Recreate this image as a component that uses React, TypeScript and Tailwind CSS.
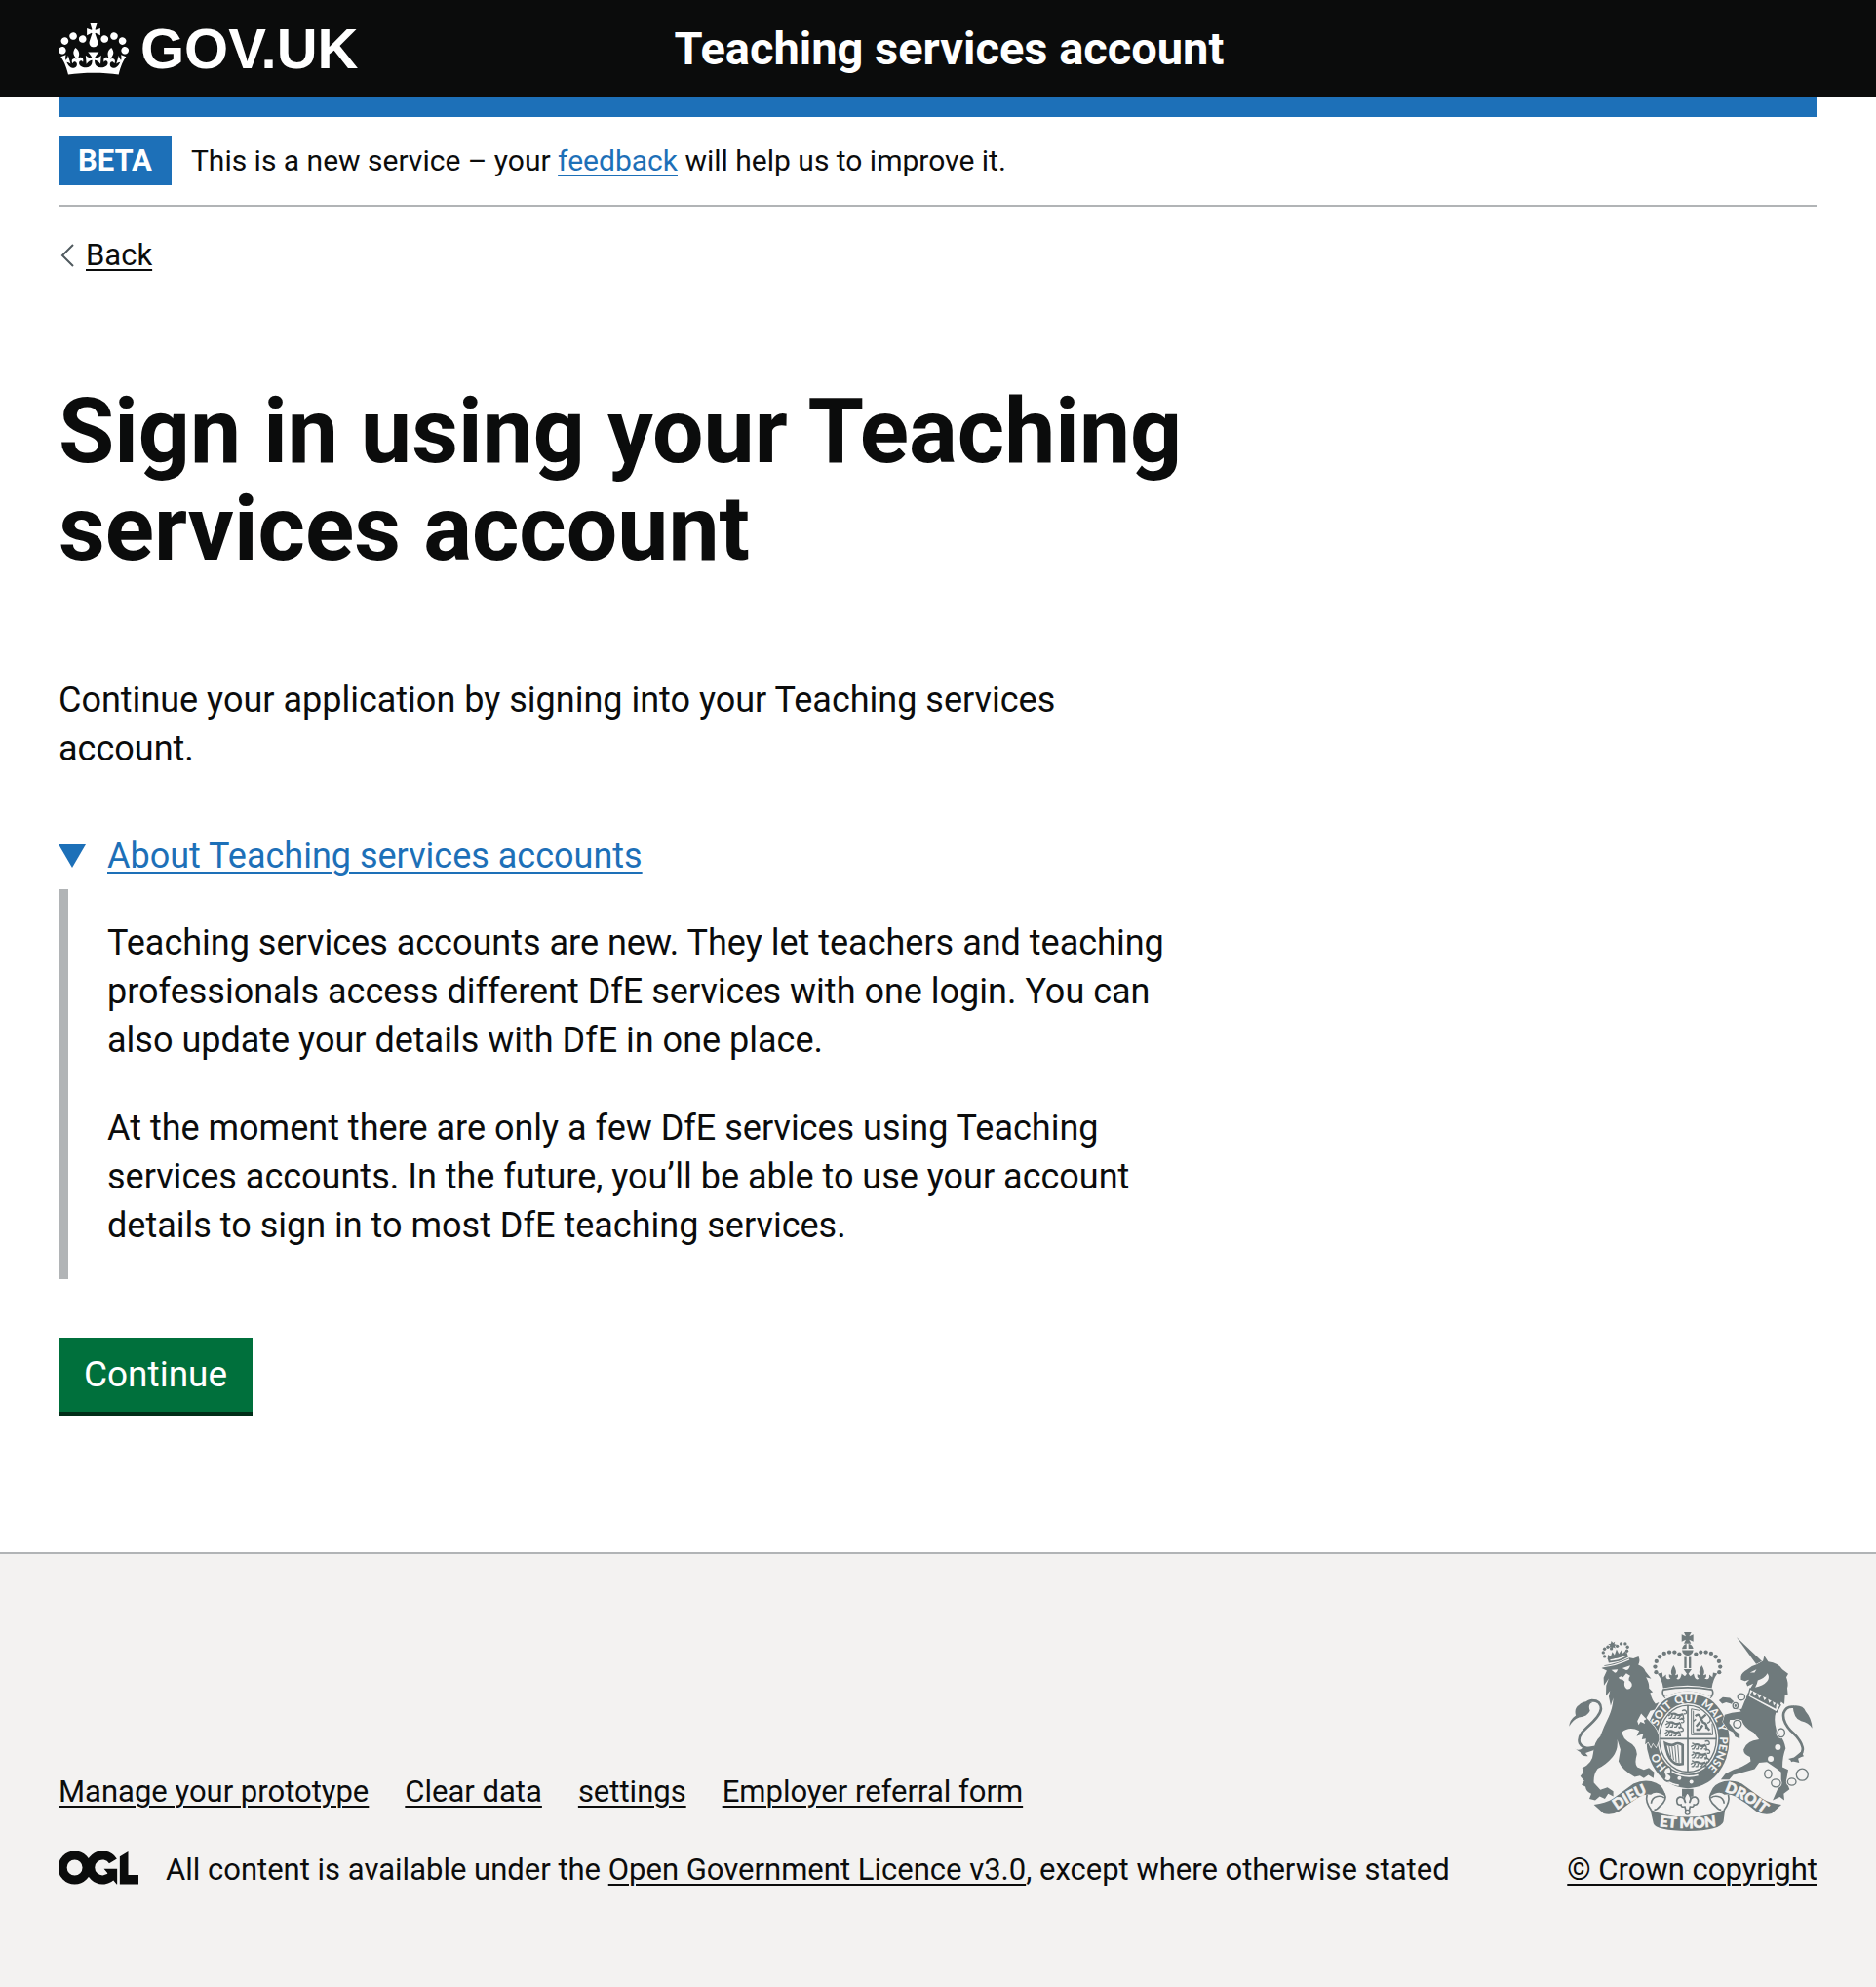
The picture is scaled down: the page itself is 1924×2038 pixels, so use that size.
import type { ReactNode } from "react";

const INK = "#6f7a7c";
const PAPER = "#f3f2f1";

function CrownIcon() {
  return (
    <svg viewBox="0 0 132 97" className="h-[53px] w-[72px] fill-current" aria-hidden="true">
      <path
        fillRule="evenodd"
        d="M25 30.2c3.5 1.5 7.7-.2 9.1-3.7 1.5-3.6-.2-7.8-3.9-9.2-3.6-1.4-7.6.3-9.1 3.9-1.4 3.5.3 7.5 3.9 9zM9 39.5c3.6 1.5 7.8-.2 9.2-3.7 1.5-3.6-.2-7.8-3.9-9.1-3.6-1.5-7.6.2-9.1 3.8-1.4 3.5.3 7.5 3.8 9zM4.4 57.2c3.5 1.5 7.7-.2 9.1-3.8 1.5-3.6-.2-7.7-3.9-9.1-3.5-1.5-7.6.3-9.1 3.8-1.4 3.5.3 7.6 3.9 9.1zm38.3-21.4c3.5 1.5 7.7-.2 9.1-3.8 1.5-3.6-.2-7.7-3.9-9.1-3.6-1.5-7.6.3-9.1 3.8-1.3 3.6.4 7.7 3.9 9.1zm64.4-5.6c-3.6 1.5-7.8-.2-9.1-3.7-1.5-3.6.2-7.8 3.8-9.2 3.6-1.4 7.7.3 9.2 3.9 1.3 3.5-.4 7.5-3.9 9zm15.9 9.3c-3.6 1.5-7.7-.2-9.1-3.7-1.5-3.6.2-7.8 3.7-9.1 3.6-1.5 7.7.2 9.2 3.8 1.5 3.5-.3 7.5-3.8 9zm4.7 17.7c-3.6 1.5-7.8-.2-9.2-3.8-1.5-3.6.2-7.7 3.9-9.1 3.6-1.5 7.7.3 9.2 3.8 1.3 3.5-.4 7.6-3.9 9.1zM89.3 35.8c-3.6 1.5-7.8-.2-9.2-3.8-1.4-3.6.2-7.7 3.9-9.1 3.6-1.5 7.7.3 9.2 3.8 1.4 3.6-.3 7.7-3.9 9.1zM69.7 17.7l8.9 4.7V9.3l-8.9 2.8c-.2-.3-.5-.6-.9-.9L72.4 0H59.6l3.5 11.2c-.3.3-.6.5-.9.9l-8.8-2.8v13.1l8.8-4.7c.3.3.6.7.9.9l-5 15.4v.1c-.2.8-.4 1.6-.4 2.4 0 4.1 3.1 7.5 7 8.1h.2c.3 0 .7.1 1 .1.4 0 .7 0 1-.1h.2c4-.6 7.1-4.1 7.1-8.1 0-.8-.1-1.7-.4-2.4V34l-5.1-15.4c.4-.2.7-.6 1-.9zM66 92.8c16.9 0 32.8 1.1 47.1 3.2 4-16.9 8.9-26.7 14-33.5l-9.6-3.4c1 4.9 1.1 7.2 0 10.2-1.5-1.4-3-4.3-4.2-8.7L108.6 76c2.8-2 5-3.2 7.5-3.3-4.4 9.4-10 11.9-13.6 11.2-4.3-.8-6.3-4.6-5.6-7.9 1-4.7 5.7-5.9 8-.5 4.3-8.7-3-11.4-7.6-8.8 7.1-7.2 7.9-13.5 2.1-21.1-8 6.1-8.1 12.3-4.5 20.8-4.7-5.4-12.1-2.5-9.5 6.2 3.4-5.2 7.9-2 7.2 3.1-.6 4.3-6.4 7.8-13.5 7.2-10.3-.9-10.9-8-11.2-13.8 2.5-.5 7.1 1.8 11 7.3L80.2 60c-4.1 4.4-8 5.3-12.3 5.4 1.4-4.4 8-11.6 8-11.6H55.5s6.4 7.2 7.9 11.6c-4.2-.1-8-1-12.3-5.4l1.4 16.4c3.9-5.5 8.5-7.7 10.9-7.3-.3 5.8-.9 12.8-11.1 13.8-7.2.6-12.9-2.9-13.5-7.2-.7-5 3.8-8.3 7.1-3.1 2.7-8.7-4.6-11.6-9.4-6.2 3.7-8.5 3.6-14.7-4.6-20.8-5.8 7.6-5 13.9 2.2 21.1-4.7-2.6-11.9.1-7.7 8.8 2.3-5.5 7.1-4.2 8.1.5.7 3.3-1.3 7.1-5.7 7.9-3.5.7-9-1.8-13.5-11.2 2.5.1 4.7 1.3 7.5 3.3l-4.7-15.4c-1.2 4.4-2.7 7.2-4.3 8.7-1.1-3-.9-5.3 0-10.2l-9.5 3.4c5 6.9 9.9 16.7 14 33.5 14.8-2.1 30.8-3.2 47.7-3.2z"
      />
    </svg>
  );
}

function LicenceLogo() {
  return (
    <svg viewBox="0 0 484 206" className="h-[35px] w-[82px] shrink-0 self-start text-[#0b0c0c]" role="img" aria-label="Open Government Licence">
      <g fill="none" stroke="currentColor" strokeWidth="54">
        <circle cx="98" cy="103" r="74" />
        <path d="M330 64A74 74 0 1 0 328 144" />
      </g>
      <path fill="currentColor" d="M275 111h80v92h-3zM371 37L422 5v143h62v55H371z" />
    </svg>
  );
}

const crownPearls = [
  [322, 165], [319, 148], [323, 131], [333, 117], [347, 107], [363, 103], [379, 103], [394, 109],
];

const chainLinks = [
  [585, 241, 11, 10], [567, 268, 8, 9], [573, 325, 12, 12], [708, 352, 11, 13],
  [668, 479, 11, 13], [692, 507, 14, 12], [741, 503, 13, 11], [773, 481, 18, 18],
];

const mottoWords: [string, number][] = [
  ["HO", 98], ["SOIT", 246], ["QUI", 328], ["MAL", 413], ["Y", 468], ["PENSE", 548],
];

/* One walking lion of the quarterings. */
function Leopard({ x, y }: { x: number; y: number }) {
  return (
    <g transform={`translate(${x} ${y})`} stroke={INK} fill="none" strokeWidth="4">
      <path strokeWidth="7" d="M10 9q9-5 17 0t20-1" />
      <path d="M11 5l-7-2M9 9l-8 5M15 11l-6 10h-6M24 12l-2 9h-7M40 11l-6 10h-6M47 10l2 11h-8M49 7q12 2 8-8-5-6-13-1" />
    </g>
  );
}

/* Half of the supporting ribbon, drawn for the left side. */
function RibbonHalf() {
  return (
    <g>
      <path
        fill={INK}
        d="M130 574Q166 570 188 556Q226 528 252 509Q290 492 322 507Q346 517 351 548Q322 528 306 543Q288 539 268 551Q236 570 208 594Q184 608 160 601Z"
      />
      <path
        fill="none"
        stroke={INK}
        strokeWidth="5"
        d="M294 543Q288 566 307 590M300 536Q328 522 348 540Q358 558 333 579Q324 590 316 590M307 570Q308 552 326 548Q340 546 347 552"
      />
    </g>
  );
}

function RoyalArms() {
  return (
    <svg viewBox="53 41 752 614" className="h-[204px] w-[250px]" role="img" aria-label="Royal coat of arms">
      <defs>
        <path id="garter" d="M420 485A99 114 0 0 1 420 257A99 114 0 0 1 420 485" />
        <path id="ribbon-left" d="M192 598Q240 560 306 534" />
        <path id="ribbon-centre" d="M320 638Q420 654 520 638" />
        <path id="ribbon-right" d="M530 532Q588 550 656 603" />
      </defs>

      {/* Imperial crown */}
      <g fill={INK}>
        <path d="M408 41h23l-7 13 13-6v22l-13-6 6 12h-22l6-12-13 6V48l13 6zM402 93q3-14 14-16v15zM422 77q12 2 15 15h-15zM402 97h35q-2 14-17 17-16-3-18-17zM409 118h7v34h-7zM423 118h7v34h-7z" />
        {crownPearls.map(([x, y]) => (
          <g key={`${x}-${y}`}>
            <circle cx={x} cy={y} r="6.5" />
            <circle cx={839 - x} cy={y} r="6.5" />
          </g>
        ))}
        <path d="M328 169l13-3 2 14 10-8q-3 19 14 13-7-6-5-14l9 3q-7-12 5-31 12 19 5 31l9-3q2 8-5 14 12 7 16-16l10 8 6-7-10-15h25l-10 15 6 7 10-8q4 23 16 16-7-6-5-14l9 3q-7-12 5-31 12 19 5 31l9-3q2 8-5 14 17 6 14-13l10 8 2-14 13 3q-14 19-17 45-75-16-150 0-3-26-18-45z" />
      </g>

      {/* Garter and shield */}
      <ellipse cx="420" cy="374" rx="128" ry="149" fill={INK} />
      <path fill={PAPER} stroke={INK} strokeWidth="5" d="M344 219Q419 205 495 219Q502 232 490 243Q419 210 350 243Q338 232 344 219Z" />
      <path d="M348 241Q419 206 492 241L486 247Q419 216 354 247Z" fill={PAPER} />
      <ellipse cx="420" cy="370" rx="94" ry="109" fill={PAPER} />
      <ellipse cx="420" cy="370" rx="88" ry="103" fill="none" stroke={INK} strokeWidth="4" />
      <g fill={PAPER} className="font-['Lato'] text-[34px] font-black">
        {mottoWords.map(([word, offset]) => (
          <text key={word} textAnchor="middle">
            <textPath href="#garter" startOffset={offset}>{word}</textPath>
          </text>
        ))}
      </g>
      <path stroke={INK} strokeWidth="5" d="M420 267v206M332 370h176" />
      <Leopard x={358} y={286} />
      <Leopard x={350} y={313} />
      <Leopard x={348} y={340} />
      <Leopard x={429} y={381} />
      <Leopard x={430} y={408} />
      <Leopard x={428} y={435} />
      <g fill="none" stroke={INK}>
        <path strokeWidth="3" d="M431 278v80h66M437 284v68h56M431 278l26 5M497 358l-2-35" />
        <path strokeWidth="7" d="M443 300q12-10 16 6l8 14q14 4 10 20M458 318l-12 14M466 328l-10 14h-10M475 330l12 14M462 308l14-12" />
        <path strokeWidth="4" d="M480 322q14-4 8-20M445 310l-8 6" />
        <path strokeWidth="8" d="M350 384q20 10 30 3t24 3v58q-20 5-34-10t-20-54z" />
        <path strokeWidth="3" d="M362 392l6 36M371 394l5 42M380 392l4 50M389 390l4 54" />
      </g>
      <path fill={INK} d="M368 470Q420 498 462 472L480 494Q420 530 358 494Z" />
      <path fill="none" stroke={PAPER} strokeWidth="5" d="M368 470Q410 494 452 482M352 498Q372 512 392 514" />
      <path fill={PAPER} stroke={INK} strokeWidth="5" d="M350 462q16-12 18 4 2 12-6 14 12 6 4 18-12 8-20-4 6-6 2-14-6-8 2-18z" />
      <g fill={PAPER}>
        <circle cx="394" cy="492" r="6" />
        <circle cx="431" cy="503" r="6" />
      </g>

      {/* Lion */}
      <g fill={INK} stroke={PAPER} strokeWidth="4" paintOrder="stroke">
        <path d="M154 152L164 143Q196 140 240 120L252 122L268 116Q274 130 267 142Q284 148 289 162L307 185L291 180Q302 200 300 214L312 226L304 228Q309 250 320 262L331 258L318 280L304 284L292 306L316 332Q332 352 331 374L322 396L312 383L306 396L298 380L288 388L290 370L278 372L283 354L262 362L270 346Q240 330 216 350Q220 368 234 378Q262 392 263 418Q254 446 264 458L284 466L300 460L316 474L314 492L298 482L284 492L272 484L256 488Q216 466 206 440L212 404L202 372Q206 404 188 426Q166 452 142 462Q128 480 130 506L150 528L172 520L190 532V548L174 540L164 556L148 548L134 560L116 556L122 540Q106 534 104 518L92 512L100 500L88 486L98 474L94 460Q126 446 128 414Q130 380 150 362Q160 334 176 302Q188 276 190 244L182 268L176 240L180 222L167 238L168 206L176 184L161 206L160 182L170 160Z" />
      </g>
      <g fill={PAPER}>
        <path d="M184 158l20-2q-4 12-10 10zM218 152l24-8q-4 16-14 14zM206 182q8-8 14-2l10-12 12 8q-6 8-4 14 12 8 9 18-6 12-16 8-10-6-6-22l-8-8q-6 4-11-4z" />
        <path d="M276 292l16 18-8 4 4 10-14-6-6 10-4-12z" />
        <path d="M155 151Q200 146 240 127L239 123Q196 143 155 147Z" />
      </g>
      <path fill={INK} d="M176 136l-4-14q32-4 60-18l4 14q-28 16-60 18z" />
      <path fill={PAPER} d="M180 126q26-4 48-14v4q-22 12-47 14z" />
      <g fill={INK}>
        <path d="M172 124l2-14 8 6 5-14 7 10 6-18 7 14 9-13 2 12 10-8 3 12q-28 14-59 13zM184 68l5 6 6-4-2 8 7 1-6 5 3 7-7-3-4 6-3-7-7 2 4-7-6-4 8-2z" />
        {[[163, 116], [159, 104], [163, 93], [173, 87], [184, 92], [202, 84], [214, 77], [227, 77], [234, 87], [232, 99]].map(([x, y]) => (
          <circle key={`${x}-${y}`} cx={x} cy={y} r="5" />
        ))}
      </g>
      <path fill="none" stroke={INK} strokeWidth="8" d="M132 400Q96 404 86 384Q78 362 108 336Q150 300 152 278Q152 252 124 252Q112 253 106 262" />
      <path fill={INK} d="M54 332Q54 312 74 298Q68 276 84 266Q98 250 126 258Q110 264 118 284Q110 302 84 304Q64 312 54 332ZM70 400Q84 410 96 398L134 392L128 406L104 414L112 424Q92 426 88 412Z" />

      {/* Unicorn */}
      <g fill={INK} stroke={PAPER} strokeWidth="3" paintOrder="stroke">
        <path d="M570 56L650 132L634 144Z" />
        <path d="M584 178Q586 166 604 156L618 146L634 140L652 130L656 114L668 132Q700 136 712 156L730 170L724 180Q732 200 727 214L729 236L720 234L718 264L708 256L704 268L612 216L622 200L604 208L600 198L610 188L596 192L584 188Z" />
        <path d="M606 228Q592 262 586 278L566 280L554 262L538 258L526 262L516 252L528 242L550 244L570 262L584 286L556 290L534 296L528 318L544 342L560 350L566 364L580 370V356L566 346L548 322L550 312L586 312Q592 336 624 352L640 372Q600 376 592 404Q592 420 612 426L614 440Q590 458 560 466L536 478L522 496H548L560 482L626 464L640 444L664 442L694 462L708 474V500L698 524L682 560L704 550L718 560L716 540L734 526L724 500L730 466L712 458Q712 424 722 400Q718 372 694 346Q684 312 692 288L700 280Z" />
      </g>
      <path fill={PAPER} d="M612 166l20-10-6 10zM636 190q20-6 30-22 8 14-2 26-12 14-36 18 6-10 8-22z" />
      <path fill={PAPER} stroke={INK} strokeWidth="4" d="M612 216L706 266L694 288L606 240Z" />
      <path fill={INK} d="M612 234l8-12 5 16 9-10 6 18 10-12 6 18 10-10 5 18 10-10 4 18 9-10-2 20-82-42z" />
      <path fill="none" stroke={INK} strokeWidth="8" d="M738 438Q780 424 774 396Q768 372 738 346Q710 314 716 290Q724 268 748 272" />
      <path fill={INK} d="M744 268Q776 264 784 286Q802 306 804 338Q792 320 770 316Q746 308 744 268ZM730 432L748 428L770 410L778 424L760 430L764 444L744 440Z" />
      <g fill="none" stroke={INK} strokeWidth="4">
        {chainLinks.map(([x, y, rx, ry]) => (
          <g key={`${x}-${y}`}>
            <ellipse cx={x} cy={y} rx={rx} ry={ry} stroke={PAPER} strokeWidth="9" />
            <ellipse cx={x} cy={y} rx={rx} ry={ry} />
          </g>
        ))}
      </g>
      <g fill={PAPER}>
        <circle cx="698" cy="396" r="9" />
        <circle cx="676" cy="432" r="9" />
      </g>

      {/* Lily */}
      <path fill={INK} d="M402 525h35v24h-35z" />
      <path fill={PAPER} stroke={INK} strokeWidth="5" d="M419 536q16 16 6 32 4-20 18-18 12 6 8 18-4 8-12 6 0 8-12 6l-3 12q-5 6-10 0l-3-12q-12 2-12-6-10 2-12-6-4-14 8-18 14-2 18 18-10-16 6-32z" />
      <circle cx="419" cy="597" r="7" fill={PAPER} stroke={INK} strokeWidth="4" />

      {/* Motto ribbon */}
      <RibbonHalf />
      <g transform="matrix(-1 0 0 1 839 0)">
        <RibbonHalf />
      </g>
      <path fill={INK} d="M304 588Q350 612 420 611Q490 612 535 588L530 626Q522 654 420 655Q322 654 314 632Z" />
      <g fill={PAPER} stroke={PAPER} strokeWidth="2" className="font-['Lato'] text-[45px] font-black" textAnchor="middle">
        <text><textPath href="#ribbon-left" startOffset="50%">DIEU</textPath></text>
        <text><textPath href="#ribbon-centre" startOffset="50%">ET MON</textPath></text>
        <text><textPath href="#ribbon-right" startOffset="50%">DROIT</textPath></text>
      </g>
    </svg>
  );
}

function FooterLink({ children }: { children: ReactNode }) {
  return (
    <a href="#" className="underline decoration-2 underline-offset-4">
      {children}
    </a>
  );
}

export default function App() {
  return (
    <div className="min-h-screen bg-[#f3f2f1] font-['Roboto',sans-serif] text-[#0b0c0c]">
      <header className="bg-[#0b0c0c] text-white">
        <div className="mx-[60px] flex h-[100px] items-center">
          <div className="w-[35%]">
            <a href="#" className="flex w-fit items-center gap-3">
              <CrownIcon />
              <span className="font-['Liberation_Sans',sans-serif] text-[58px] leading-[60px] font-bold">GOV.UK</span>
            </a>
          </div>
          <a href="#" className="text-[47px] leading-[50px] font-bold">
            Teaching services account
          </a>
        </div>
      </header>

      <div className="border-b-2 border-[#b1b4b6] bg-white px-[60px] pb-[140px]">
        <div className="h-5 bg-[#1d70b8]" />
        <div className="flex items-center gap-5 border-b-2 border-[#b1b4b6] py-5 text-[30px] leading-[50px]">
          <strong className="bg-[#1d70b8] px-5 text-[31px] font-bold text-white">BETA</strong>
          <p>
            This is a new service – your{" "}
            <a href="#" className="text-[#1d70b8] underline decoration-2 underline-offset-4">feedback</a>
            {" "}will help us to improve it.
          </p>
        </div>

        <a href="#" className="mt-[30px] inline-flex items-center gap-3 text-[31px] leading-10">
          <svg viewBox="0 0 16 24" className="h-6 w-4" fill="none" stroke="#505a5f" strokeWidth="2" aria-hidden="true">
            <path d="M15 1L4 12l11 11" />
          </svg>
          <span className="underline decoration-2 underline-offset-4">Back</span>
        </a>

        <main className="w-[64%] pt-[111px] text-[36px] leading-[50px]">
          <h1 className="mb-[100px] text-[93px] leading-[100px] font-bold">
            Sign in using your Teaching services account
          </h1>
          <p className="mb-[60px]">
            Continue your application by signing into your Teaching services account.
          </p>

          <details open className="group mb-[60px]">
            <summary className="mb-[9px] flex w-fit cursor-pointer list-none items-center gap-[22px] text-[#1d70b8]">
              <svg viewBox="0 0 28 24" className="h-6 w-7 -rotate-90 fill-current group-open:rotate-0" aria-hidden="true">
                <path d="M0 0h28L14 24z" />
              </svg>
              <span className="underline decoration-2 underline-offset-4">About Teaching services accounts</span>
            </summary>
            <div className="border-l-10 border-[#b1b4b6] py-[30px] pl-10">
              <p className="mb-10">
                Teaching services accounts are new. They let teachers and teaching professionals access
                different DfE services with one login. You can also update your details with DfE in one place.
              </p>
              <p>
                At the moment there are only a few DfE services using Teaching services accounts. In the
                future, you’ll be able to use your account details to sign in to most DfE teaching services.
              </p>
            </div>
          </details>

          <button type="button" className="block h-20 min-w-[199px] cursor-pointer border-b-4 border-[#002d18] bg-[#00703c] px-6 text-[37px] text-white">
            Continue
          </button>
        </main>
      </div>

      <footer className="flex items-end justify-between px-[60px] pt-20 pb-[94px] text-[31px] leading-[50px]">
        <div>
          <nav className="mb-[30px] flex flex-wrap gap-x-[37px]">
            <FooterLink>Manage your prototype</FooterLink>
            <FooterLink>Clear data</FooterLink>
            <FooterLink>settings</FooterLink>
            <FooterLink>Employer referral form</FooterLink>
          </nav>
          <div className="flex items-center gap-7">
            <div className="flex h-[50px] pt-[5px]">
              <LicenceLogo />
            </div>
            <p>
              All content is available under the <FooterLink>Open Government Licence v3.0</FooterLink>, except
              where otherwise stated
            </p>
          </div>
        </div>
        <a href="#" className="flex w-[261px] flex-col items-center gap-[15px] underline decoration-2 underline-offset-4">
          <RoyalArms />
          <span className="self-end">© Crown copyright</span>
        </a>
      </footer>
    </div>
  );
}
